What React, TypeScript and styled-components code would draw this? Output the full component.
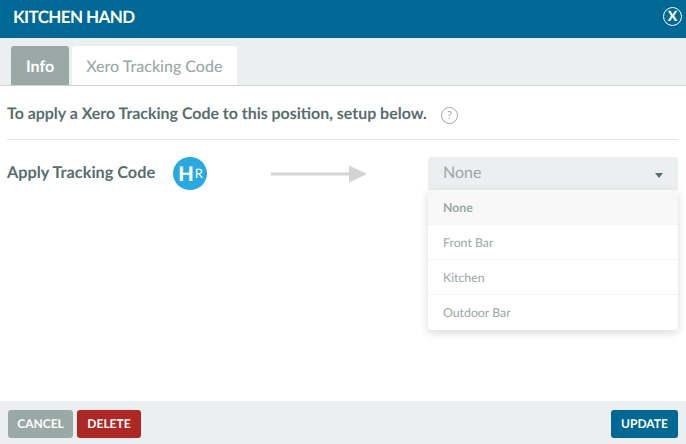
import styled, { createGlobalStyle } from "styled-components";

const OPTIONS = ["None", "Front Bar", "Kitchen", "Outdoor Bar"];

const GlobalStyle = createGlobalStyle`
  html, body {
    margin: 0;
    padding: 0;
    background: #ffffff;
  }
  * {
    box-sizing: border-box;
  }
  body {
    text-rendering: geometricPrecision;
  }
`;

const App = () => {
  return (
    <Modal>
      <GlobalStyle />
      <Header>
        <Title>KITCHEN HAND</Title>
        <CloseButton>X</CloseButton>
      </Header>
      <TabStrip>
        <Tab $active>Info</Tab>
        <Tab>Xero Tracking Code</Tab>
      </TabStrip>
      <Body>
        <IntroRow>
          <IntroText>
            To apply a Xero Tracking Code to this position, setup below.
          </IntroText>
          <HelpIcon>?</HelpIcon>
        </IntroRow>
        <TrackingRow>
          <TrackingLabel>Apply Tracking Code</TrackingLabel>
          <HrLogo>
            <HrBig>H</HrBig>
            <HrSmall>R</HrSmall>
          </HrLogo>
          <Arrow width="97" height="18" viewBox="0 0 97 18">
            <rect x="0" y="7.5" width="79" height="3" fill="#d2d4d4" />
            <path d="M78 0.5 L96 9 L78 17.5 Z" fill="#d2d4d4" />
          </Arrow>
          <SelectWrap>
            <SelectBox>
              <SelectValue>None</SelectValue>
              <Caret />
            </SelectBox>
            <Menu>
              {OPTIONS.map((o, i) => (
                <MenuItem key={o} $selected={i === 0}>
                  {o}
                </MenuItem>
              ))}
            </Menu>
          </SelectWrap>
        </TrackingRow>
      </Body>
      <Footer>
        <FooterGroup>
          <Button $color="#9aa8a6" $width={65}>CANCEL</Button>
          <Button $color="#ad2824" $width={64}>DELETE</Button>
        </FooterGroup>
        <Button $color="#006894" $width={67}>UPDATE</Button>
      </Footer>
    </Modal>
  );
};

const Modal = styled.div`
  width: 686px;
  height: 444px;
  display: flex;
  flex-direction: column;
  overflow: hidden;
  font-family: "Lato", "Liberation Sans", sans-serif;
`;

const Header = styled.div`
  height: 38px;
  flex: none;
  background: #006894;
  display: flex;
  align-items: center;
  justify-content: space-between;
  padding: 0 4px 0 13px;
`;

const Title = styled.div`
  color: #ffffff;
  font-size: 17px;
  font-weight: 700;
  letter-spacing: -0.6px;
  margin-top: -6px;
`;

const CloseButton = styled.div`
  width: 19px;
  height: 19px;
  margin-top: -6px;
  border: 1.5px solid #ffffff;
  border-radius: 50%;
  color: #ffffff;
  font-size: 14px;
  font-weight: 900;
  line-height: 16px;
  text-align: center;
`;

const TabStrip = styled.div`
  height: 48px;
  flex: none;
  background: #ebeff0;
  border-bottom: 1px solid #cfd3d3;
  padding: 8px 0 0 11px;
  display: flex;
  gap: 3px;
`;

const Tab = styled.div<{ $active?: boolean }>`
  height: 39px;
  padding: 0 15px 0 ${(p) => (p.$active ? "15px" : "14px")};
  border-radius: 3px 3px 0 0;
  background: ${(p) => (p.$active ? "#9aa8a6" : "#ffffff")};
  color: ${(p) => (p.$active ? "#ffffff" : "#9aa8a6")};
  font-size: 16px;
  font-weight: ${(p) => (p.$active ? 700 : 500)};
  line-height: 41px;
`;

const Body = styled.div`
  flex: 1;
  padding: 0 8px 0 7px;
`;

const IntroRow = styled.div`
  height: 54px;
  display: flex;
  align-items: center;
  gap: 14px;
  border-bottom: 1px solid #e4e6e6;
  padding-top: 5px;
`;

const IntroText = styled.div`
  color: #586d6e;
  font-size: 15.95px;
  font-weight: 700;
  margin-top: -3px;
`;

const HelpIcon = styled.div`
  width: 17px;
  height: 17px;
  border: 1px solid #9aa8a6;
  border-radius: 50%;
  color: #9aa8a6;
  font-size: 11px;
  line-height: 15px;
  text-align: center;
`;

const TrackingRow = styled.div`
  display: flex;
  align-items: flex-start;
  padding-top: 17px;
`;

const TrackingLabel = styled.div`
  width: 166px;
  flex: none;
  color: #586d6e;
  font-size: 16.3px;
  font-weight: 700;
  line-height: 31px;
`;

const HrLogo = styled.div`
  width: 34px;
  height: 33px;
  flex: none;
  margin-right: 64px;
  padding-left: 1px;
  border-radius: 50%;
  background: #2aa9e0;
  display: flex;
  align-items: center;
  justify-content: center;
  color: #ffffff;
`;

const HrBig = styled.span`
  font-size: 20px;
  font-weight: 900;
  line-height: 1;
`;

const HrSmall = styled.span`
  font-size: 13px;
  font-weight: 400;
  line-height: 1;
  margin: -1px 0 0 1px;
`;

const Arrow = styled.svg`
  flex: none;
  margin: 8px 60px 0 0;
`;

const SelectWrap = styled.div`
  position: relative;
  width: 250px;
  flex: none;
`;

const SelectBox = styled.div`
  height: 33px;
  padding: 0 15px;
  border-radius: 4px 4px 0 0;
  background: #ebeff0;
  display: flex;
  align-items: center;
  justify-content: space-between;
`;

const SelectValue = styled.span`
  color: #9aa8a6;
  font-size: 16px;
  margin-top: -3px;
`;

const Caret = styled.span`
  width: 0;
  height: 0;
  margin: 4px 0 0 0;
  border-left: 4.5px solid transparent;
  border-right: 4.5px solid transparent;
  border-top: 5px solid #586d6e;
`;

const Menu = styled.div`
  position: absolute;
  top: 33px;
  left: 0;
  right: 0;
  background: #ffffff;
  border-radius: 0 0 4px 4px;
  box-shadow: 0 3px 10px rgba(0, 0, 0, 0.15);
  overflow: hidden;
`;

const MenuItem = styled.div<{ $selected?: boolean }>`
  height: 35px;
  padding: 0 15px;
  background: ${(p) => (p.$selected ? "#f8f8f8" : "#ffffff")};
  border-bottom: 1px solid #f5f6f6;
  color: #9aa8a6;
  font-size: 12.3px;
  font-weight: ${(p) => (p.$selected ? 700 : 400)};
  line-height: 35px;
  &:last-child {
    border-bottom: none;
  }
`;

const Footer = styled.div`
  height: 43px;
  flex: none;
  background: #ebeff0;
  padding: 9px 8px 0;
  display: flex;
  align-items: flex-start;
  justify-content: space-between;
`;

const FooterGroup = styled.div`
  display: flex;
  gap: 4px;
`;

const Button = styled.div<{ $color: string; $width: number }>`
  width: ${(p) => p.$width}px;
  height: 28px;
  border-radius: 3px;
  background: ${(p) => p.$color};
  color: #ffffff;
  font-size: 12px;
  font-weight: 700;
  line-height: 28px;
  text-align: center;
`;

export default App;
